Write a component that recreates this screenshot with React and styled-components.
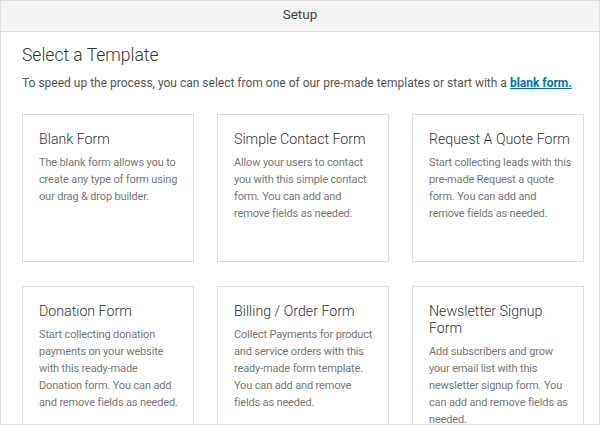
import React from "react";
import styled, { createGlobalStyle } from "styled-components";

const FONT = `"Roboto", "Liberation Sans", sans-serif`;

const GlobalStyle = createGlobalStyle`
  html, body { margin: 0; padding: 0; background: #ffffff; }
  body { font-family: ${FONT}; -webkit-font-smoothing: antialiased; }
  * { box-sizing: border-box; }
`;

const Frame = styled.div`
  width: 600px;
  height: 425px;
  border: 1px solid #dedede;
  background: #fff;
  overflow: hidden;
  display: flex;
  flex-direction: column;
`;

const Header = styled.div`
  height: 31px;
  flex: 0 0 auto;
  background: #f3f3f3;
  border-bottom: 1px solid #dcdcdc;
  display: flex;
  align-items: center;
  justify-content: center;
  font-size: 13.5px;
  color: #444;
  padding-bottom: 4px;
`;

const Body = styled.div`
  padding: 10px 15px 0 21px;
`;

const Heading = styled.h2`
  margin: 0;
  font-size: 17.5px;
  font-weight: 300;
  line-height: 26px;
  color: #333;
`;

const Intro = styled.p`
  margin: 6px 0 0;
  font-size: 12px;
  line-height: 18px;
  color: #555;
`;

const Link = styled.a`
  color: #0073aa;
  font-weight: 700;
  text-decoration: underline;
`;

const Grid = styled.div`
  margin-top: 22px;
  display: grid;
  grid-template-columns: repeat(3, 172px);
  column-gap: 23px;
  row-gap: 24px;
`;

const Card = styled.div`
  height: 148px;
  border: 1px solid #dddddd;
  padding: 16px 10px 0 16px;
`;

const CardTitle = styled.h3`
  margin: 0;
  font-size: 14.2px;
  font-weight: 300;
  line-height: 17px;
  color: #333;
`;

const CardDesc = styled.p`
  margin: 6px 0 0;
  font-size: 11px;
  line-height: 17px;
  letter-spacing: -0.15px;
  color: #777;
`;

const templates = [
  { title: "Blank Form", desc: "The blank form allows you to create any type of form using our drag & drop builder." },
  { title: "Simple Contact Form", desc: "Allow your users to contact you with this simple contact form. You can add and remove fields as needed." },
  { title: "Request A Quote Form", desc: "Start collecting leads with this pre-made Request a quote form. You can add and remove fields as needed." },
  { title: "Donation Form", desc: "Start collecting donation payments on your website with this ready-made Donation form. You can add and remove fields as needed." },
  { title: "Billing / Order Form", desc: "Collect Payments for product and service orders with this ready-made form template. You can add and remove fields as needed." },
  { title: "Newsletter Signup Form", desc: "Add subscribers and grow your email list with this newsletter signup form. You can add and remove fields as needed." },
];

export default function App() {
  return (
    <>
      <GlobalStyle />
      <Frame>
        <Header>Setup</Header>
        <Body>
          <Heading>Select a Template</Heading>
          <Intro>
            To speed up the process, you can select from one of our pre-made templates or start with a{" "}
            <Link href="#">blank form.</Link>
          </Intro>
          <Grid>
            {templates.map((t) => (
              <Card key={t.title}>
                <CardTitle>{t.title}</CardTitle>
                <CardDesc>{t.desc}</CardDesc>
              </Card>
            ))}
          </Grid>
        </Body>
      </Frame>
    </>
  );
}
